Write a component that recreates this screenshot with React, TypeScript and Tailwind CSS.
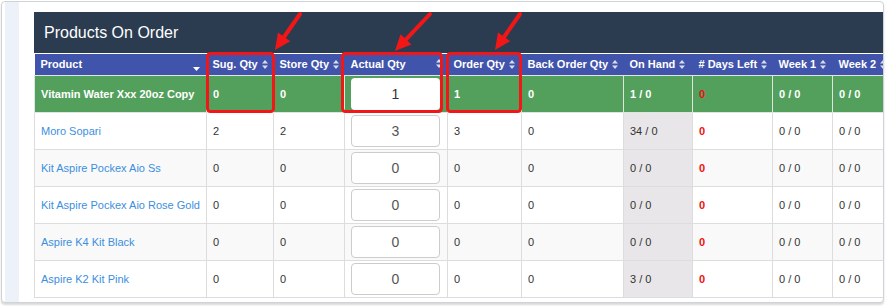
import React from "react";

type Row = {
  name: string;
  sug: number;
  store: number;
  actual: number;
  order: number;
  back: number;
  onHand: string;
  days: number;
  week1: string;
  week2: string;
};

const rows: Row[] = [
  { name: "Vitamin Water Xxx 20oz Copy", sug: 0, store: 0, actual: 1, order: 1, back: 0, onHand: "1 / 0", days: 0, week1: "0 / 0", week2: "0 / 0" },
  { name: "Moro Sopari", sug: 2, store: 2, actual: 3, order: 3, back: 0, onHand: "34 / 0", days: 0, week1: "0 / 0", week2: "0 / 0" },
  { name: "Kit Aspire Pockex Aio Ss", sug: 0, store: 0, actual: 0, order: 0, back: 0, onHand: "0 / 0", days: 0, week1: "0 / 0", week2: "0 / 0" },
  { name: "Kit Aspire Pockex Aio Rose Gold", sug: 0, store: 0, actual: 0, order: 0, back: 0, onHand: "0 / 0", days: 0, week1: "0 / 0", week2: "0 / 0" },
  { name: "Aspire K4 Kit Black", sug: 0, store: 0, actual: 0, order: 0, back: 0, onHand: "0 / 0", days: 0, week1: "0 / 0", week2: "0 / 0" },
  { name: "Aspire K2 Kit Pink", sug: 0, store: 0, actual: 0, order: 0, back: 0, onHand: "3 / 0", days: 0, week1: "0 / 0", week2: "0 / 0" },
];

function SortIcon() {
  return (
    <svg width="6" height="9" viewBox="0 0 6 9" className="inline-block ml-[4px] -mt-[2px] opacity-80">
      <polygon points="0,3.5 3,0 6,3.5" fill="white" />
      <polygon points="0,5.5 3,9 6,5.5" fill="white" />
    </svg>
  );
}

function Annotations() {
  const arrows = [
    { x1: 300, y1: 14, x2: 275, y2: 50 },
    { x1: 430, y1: 14, x2: 395, y2: 51 },
    { x1: 520, y1: 14, x2: 495, y2: 50 },
  ];
  return (
    <svg className="absolute inset-0 pointer-events-none" width="886" height="307">
      <rect x="207.5" y="53.5" width="66" height="58" rx="3" fill="none" stroke="#f31616" strokeWidth="3" />
      <rect x="342.5" y="53.5" width="99" height="58" rx="3" fill="none" stroke="#f31616" strokeWidth="3" />
      <rect x="447.5" y="53.5" width="73" height="58" rx="3" fill="none" stroke="#f31616" strokeWidth="3" />
      {arrows.map((a, i) => {
        const dx = a.x2 - a.x1;
        const dy = a.y2 - a.y1;
        const len = Math.sqrt(dx * dx + dy * dy);
        const ux = dx / len;
        const uy = dy / len;
        const bx = a.x2 - ux * 16;
        const by = a.y2 - uy * 16;
        const px = -uy * 7.5;
        const py = ux * 7.5;
        return (
          <g key={i}>
            <line x1={a.x1} y1={a.y1} x2={bx + ux * 2} y2={by + uy * 2} stroke="#f31616" strokeWidth="4" strokeLinecap="round" />
            <polygon
              points={`${a.x2},${a.y2} ${bx + px},${by + py} ${bx - px},${by - py}`}
              fill="#f31616"
            />
          </g>
        );
      })}
    </svg>
  );
}

export default function App() {
  const headers = [
    "Sug. Qty",
    "Store Qty",
    "Actual Qty",
    "Order Qty",
    "Back Order Qty",
    "On Hand",
    "# Days Left",
    "Week 1",
    "Week 2",
  ];

  return (
    <div className="relative w-[886px] h-[307px] bg-white overflow-hidden font-['Liberation_Sans',Arial,sans-serif]">
      <div className="absolute left-[1px] top-[1px] w-[883px] h-[302px] border border-[#cfd2d6] rounded-[4px] shadow-[0_2px_2px_rgba(0,0,0,0.15)] overflow-hidden flex bg-white">
        <div className="w-[14px] ml-[3px] bg-[#edf1f9] shrink-0" />
        <div className="flex-1 pl-[15px] pt-[10px] overflow-hidden">
          <div className="w-[900px]">
            <div className="h-[41px] bg-[#2b3c51] flex items-center pl-[10px] text-white text-[16px]">
              Products On Order
            </div>
            <table className="table-fixed border-collapse text-[11px] text-[#333] whitespace-nowrap">
              <colgroup>
                <col className="w-[172px]" />
                <col className="w-[67px]" />
                <col className="w-[71px]" />
                <col className="w-[103px]" />
                <col className="w-[74px]" />
                <col className="w-[102px]" />
                <col className="w-[69px]" />
                <col className="w-[80px]" />
                <col className="w-[60px]" />
                <col className="w-[80px]" />
              </colgroup>
              <thead>
                <tr className="h-[22px] bg-[#4154ac] text-white font-bold border-t border-white">
                  <th className="relative text-left pl-[6px] font-bold">
                    Product
                    <svg width="7" height="4" viewBox="0 0 7 4" className="absolute right-[7px] bottom-[4px]">
                      <polygon points="0,0 7,0 3.5,4" fill="white" />
                    </svg>
                  </th>
                  {headers.map((h) => (
                    <th key={h} className="text-left pl-[6px] font-bold">
                      {h === "Actual Qty" ? (
                        <div className="flex items-center justify-between pr-[6px]">
                          <span>{h}</span>
                          <SortIcon />
                        </div>
                      ) : (
                        <>
                          {h}
                          <SortIcon />
                        </>
                      )}
                    </th>
                  ))}
                </tr>
              </thead>
              <tbody>
                {rows.map((r, i) => {
                  const hl = i === 0;
                  const stripe = i === 2 || i === 4;
                  const rowBg = hl ? "bg-[#52a05c]" : stripe ? "bg-[#f9f9f9]" : "bg-white";
                  const cell = hl
                    ? "pl-[6px] border border-[#dfe6df] text-white font-bold"
                    : "pl-[6px] border border-[#dddddd]";
                  return (
                    <tr key={r.name} className={`h-[37px] ${rowBg}`}>
                      <td className={`${cell} ${hl ? "" : "text-[#3b8fdf]"}`}>{r.name}</td>
                      <td className={cell}>{r.sug}</td>
                      <td className={cell}>{r.store}</td>
                      <td className={`${cell} px-[7px]`}>
                        <div
                          className={`h-[32px] rounded-[4px] bg-white flex items-center justify-center text-[14px] font-normal ${
                            hl ? "text-[#333]" : "text-[#555] border border-[#cccccc]"
                          }`}
                        >
                          {r.actual}
                        </div>
                      </td>
                      <td className={cell}>{r.order}</td>
                      <td className={cell}>{r.back}</td>
                      <td className={`${cell} ${hl ? "" : "bg-[#e8e6e8]"}`}>{r.onHand}</td>
                      <td className={`${cell} !text-[#ee1111] font-bold`}>{r.days}</td>
                      <td className={cell}>{r.week1}</td>
                      <td className={cell}>{r.week2}</td>
                    </tr>
                  );
                })}
              </tbody>
            </table>
          </div>
        </div>
      </div>
      <Annotations />
    </div>
  );
}
